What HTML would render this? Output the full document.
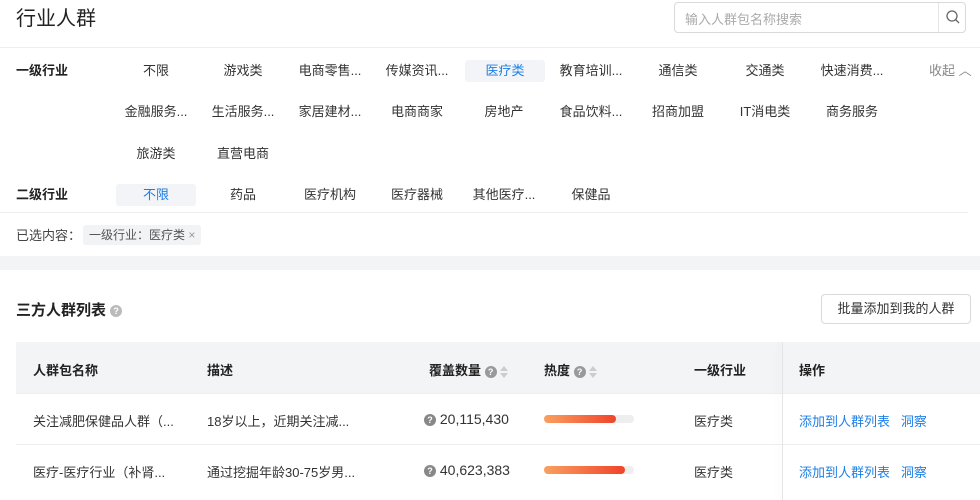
<!DOCTYPE html><html><head><meta charset="utf-8"><style>
*{margin:0;padding:0;box-sizing:border-box}
body{width:980px;height:500px;overflow:hidden;background:#fff;font-family:"Liberation Sans","Noto Sans CJK SC",sans-serif;color:#333;font-size:13px;position:relative}
.a{position:absolute;white-space:nowrap}
.it{position:absolute;width:80px;height:22px;line-height:22px;text-align:center;font-size:13px;color:#333}
.sel{background:#f2f4f7;color:#1e7fe6;border-radius:3px}
.q{display:inline-block;width:12px;height:12px;border-radius:50%;background:#999;color:#fff;font-size:9px;line-height:12px;text-align:center;font-weight:bold;vertical-align:middle}
.sort{display:inline-block;vertical-align:middle;margin-left:3px;width:8px;height:12px;position:relative}
.sort:before{content:"";position:absolute;top:0;left:0;border:4px solid transparent;border-bottom:5px solid #ccc;border-top:0}
.sort:after{content:"";position:absolute;bottom:0;left:0;border:4px solid transparent;border-top:5px solid #ccc;border-bottom:0}
.bar{position:absolute;width:90px;height:8px;border-radius:4px;background:#eee}
.bar i{display:block;height:8px;border-radius:4px;background:linear-gradient(90deg,#f9a060,#f0442a)}
.lk{color:#1e7fe6}
.num{line-height:20px;font-size:14px}
</style></head><body>
<div class="a" style="left:16px;top:2px;font-size:20px;color:#222">行业人群</div>
<div class="a" style="left:674px;top:2px;width:292px;height:31px;border:1px solid #d9d9d9;border-radius:4px"></div>
<div class="a" style="left:685px;top:9px;color:#aaa;font-size:13px">输入人群包名称搜索</div>
<div class="a" style="left:938px;top:3px;width:1px;height:29px;background:#e5e5e5"></div>
<svg class="a" style="left:945px;top:9px" width="16" height="16" viewBox="0 0 16 16"><circle cx="7" cy="7" r="5" fill="none" stroke="#666" stroke-width="1.3"/><path d="M10.5 10.5L14 14" stroke="#666" stroke-width="1.3"/></svg>
<div class="a" style="left:0;top:47px;width:980px;height:1px;background:#eee"></div>
<div class="a" style="left:16px;top:60px;font-size:13px;color:#222;font-weight:bold">一级行业</div>
<div class="it" style="left:116px;top:60px">不限</div><div class="it" style="left:203px;top:60px">游戏类</div><div class="it" style="left:290px;top:60px">电商零售...</div><div class="it" style="left:377px;top:60px">传媒资讯...</div><div class="it sel" style="left:465px;top:60px">医疗类</div><div class="it" style="left:551px;top:60px">教育培训...</div><div class="it" style="left:638px;top:60px">通信类</div><div class="it" style="left:725px;top:60px">交通类</div><div class="it" style="left:812px;top:60px">快速消费...</div>
<div class="a" style="left:929px;top:60px;color:#888">收起 ︿</div>
<div class="it" style="left:116px;top:101px">金融服务...</div><div class="it" style="left:203px;top:101px">生活服务...</div><div class="it" style="left:290px;top:101px">家居建材...</div><div class="it" style="left:377px;top:101px">电商商家</div><div class="it" style="left:464px;top:101px">房地产</div><div class="it" style="left:551px;top:101px">食品饮料...</div><div class="it" style="left:638px;top:101px">招商加盟</div><div class="it" style="left:725px;top:101px">IT消电类</div><div class="it" style="left:812px;top:101px">商务服务</div>
<div class="it" style="left:116px;top:143px">旅游类</div><div class="it" style="left:203px;top:143px">直营电商</div>
<div class="a" style="left:16px;top:184px;font-size:13px;color:#222;font-weight:bold">二级行业</div>
<div class="it sel" style="left:116px;top:184px">不限</div><div class="it" style="left:203px;top:184px">药品</div><div class="it" style="left:290px;top:184px">医疗机构</div><div class="it" style="left:377px;top:184px">医疗器械</div><div class="it" style="left:464px;top:184px">其他医疗...</div><div class="it" style="left:551px;top:184px">保健品</div>
<div class="a" style="left:0;top:212px;width:968px;height:1px;background:#eee"></div>
<div class="a" style="left:16px;top:225px;color:#444">已选内容：</div>
<div class="a" style="left:83px;top:225px;height:20px;line-height:20px;padding:0 6px;background:#f2f3f5;border-radius:3px;font-size:12px;color:#555">一级行业：医疗类 <span style="color:#999">×</span></div>
<div class="a" style="left:0;top:256px;width:980px;height:14px;background:#f3f4f6"></div>
<div class="a" style="left:16px;top:299px;font-size:15px;color:#222;font-weight:bold">三方人群列表 <span class="q" style="background:#bbb">?</span></div>
<div class="a" style="left:821px;top:294px;width:150px;height:30px;border:1px solid #d9d9d9;border-radius:4px;text-align:center;line-height:28px;font-size:13px;color:#333">批量添加到我的人群</div>
<div class="a" style="left:16px;top:342px;width:964px;height:51px;background:#f3f4f6"></div>
<div class="a" style="left:16px;top:444px;width:964px;height:1px;background:#eee"></div>
<div class="a" style="left:16px;top:393px;width:964px;height:1px;background:#eee"></div>
<div class="a" style="left:782px;top:342px;width:1px;height:158px;background:#e5e5e5;box-shadow:-3px 0 6px rgba(0,0,0,.08)"></div>
<div class="a" style="left:33px;top:360px;font-weight:bold;color:#222">人群包名称</div>
<div class="a" style="left:207px;top:360px;font-weight:bold;color:#222">描述</div>
<div class="a" style="left:429px;top:360px;font-weight:bold;color:#222">覆盖数量 <span class="q">?</span><span class="sort"></span></div>
<div class="a" style="left:544px;top:360px;font-weight:bold;color:#222">热度 <span class="q">?</span><span class="sort"></span></div>
<div class="a" style="left:694px;top:360px;font-weight:bold;color:#222">一级行业</div>
<div class="a" style="left:799px;top:360px;font-weight:bold;color:#222">操作</div>
<div class="a" style="left:33px;top:411px">关注减肥保健品人群（...</div>
<div class="a" style="left:207px;top:411px">18岁以上，近期关注减...</div>
<div class="a num" style="left:424px;top:409px"><span class="q" style="background:#888">?</span> 20,115,430</div>
<div class="bar" style="left:544px;top:415px"><i style="width:72px"></i></div>
<div class="a" style="left:694px;top:411px">医疗类</div>
<div class="a lk" style="left:799px;top:411px">添加到人群列表 &nbsp; 洞察</div>
<div class="a" style="left:33px;top:462px">医疗-医疗行业（补肾...</div>
<div class="a" style="left:207px;top:462px">通过挖掘年龄30-75岁男...</div>
<div class="a num" style="left:424px;top:460px"><span class="q" style="background:#888">?</span> 40,623,383</div>
<div class="bar" style="left:544px;top:466px"><i style="width:81px"></i></div>
<div class="a" style="left:694px;top:462px">医疗类</div>
<div class="a lk" style="left:799px;top:462px">添加到人群列表 &nbsp; 洞察</div>
</body></html>
